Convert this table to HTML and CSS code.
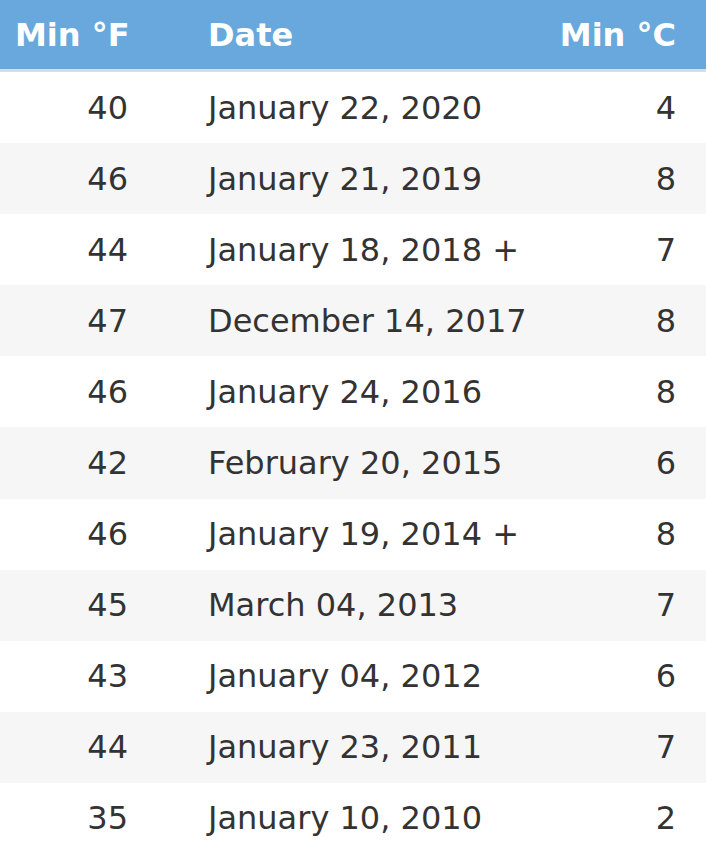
FILE: index.html
```html
<!DOCTYPE html>
<html>
<head>
<meta charset="utf-8">
<link rel="stylesheet" href="styles.css">
</head>
<body>
<div class="table">
  <div class="row head">
    <div class="c1">Min °F</div>
    <div class="c2">Date</div>
    <div class="c3">Min °C</div>
  </div>
  <div class="row"><div class="c1">40</div><div class="c2">January 22, 2020</div><div class="c3">4</div></div>
  <div class="row"><div class="c1">46</div><div class="c2">January 21, 2019</div><div class="c3">8</div></div>
  <div class="row"><div class="c1">44</div><div class="c2">January 18, 2018 +</div><div class="c3">7</div></div>
  <div class="row"><div class="c1">47</div><div class="c2">December 14, 2017</div><div class="c3">8</div></div>
  <div class="row"><div class="c1">46</div><div class="c2">January 24, 2016</div><div class="c3">8</div></div>
  <div class="row"><div class="c1">42</div><div class="c2">February 20, 2015</div><div class="c3">6</div></div>
  <div class="row"><div class="c1">46</div><div class="c2">January 19, 2014 +</div><div class="c3">8</div></div>
  <div class="row"><div class="c1">45</div><div class="c2">March 04, 2013</div><div class="c3">7</div></div>
  <div class="row"><div class="c1">43</div><div class="c2">January 04, 2012</div><div class="c3">6</div></div>
  <div class="row"><div class="c1">44</div><div class="c2">January 23, 2011</div><div class="c3">7</div></div>
  <div class="row"><div class="c1">35</div><div class="c2">January 10, 2010</div><div class="c3">2</div></div>
</div>
</body>
</html>
```
FILE: styles.css
```css
html, body {
  margin: 0;
  padding: 0;
  background: #fff;
}
body {
  font-family: "DejaVu Sans", Verdana, sans-serif;
  font-size: 32px;
  color: #333;
  overflow: hidden;
}
.table {
  display: flex;
  flex-direction: column;
}
.row {
  display: grid;
  grid-template-columns: 113px 1fr auto;
  column-gap: 80px;
  align-items: center;
  height: 71.1px;
  padding: 0 30px 0 15px;
  box-sizing: border-box;
  line-height: 1;
}
.row:nth-child(odd) {
  background: #f6f6f6;
}
.row.head {
  background: #68a8dc;
  color: #fff;
  font-weight: bold;
  height: 72px;
  border-bottom: 3px solid #dcdcdc;
}
.c1 {
  text-align: right;
  white-space: nowrap;
}
.head .c1 {
  text-align: left;
}
.c2 {
  white-space: nowrap;
}
.c3 {
  text-align: right;
  white-space: nowrap;
}
```
